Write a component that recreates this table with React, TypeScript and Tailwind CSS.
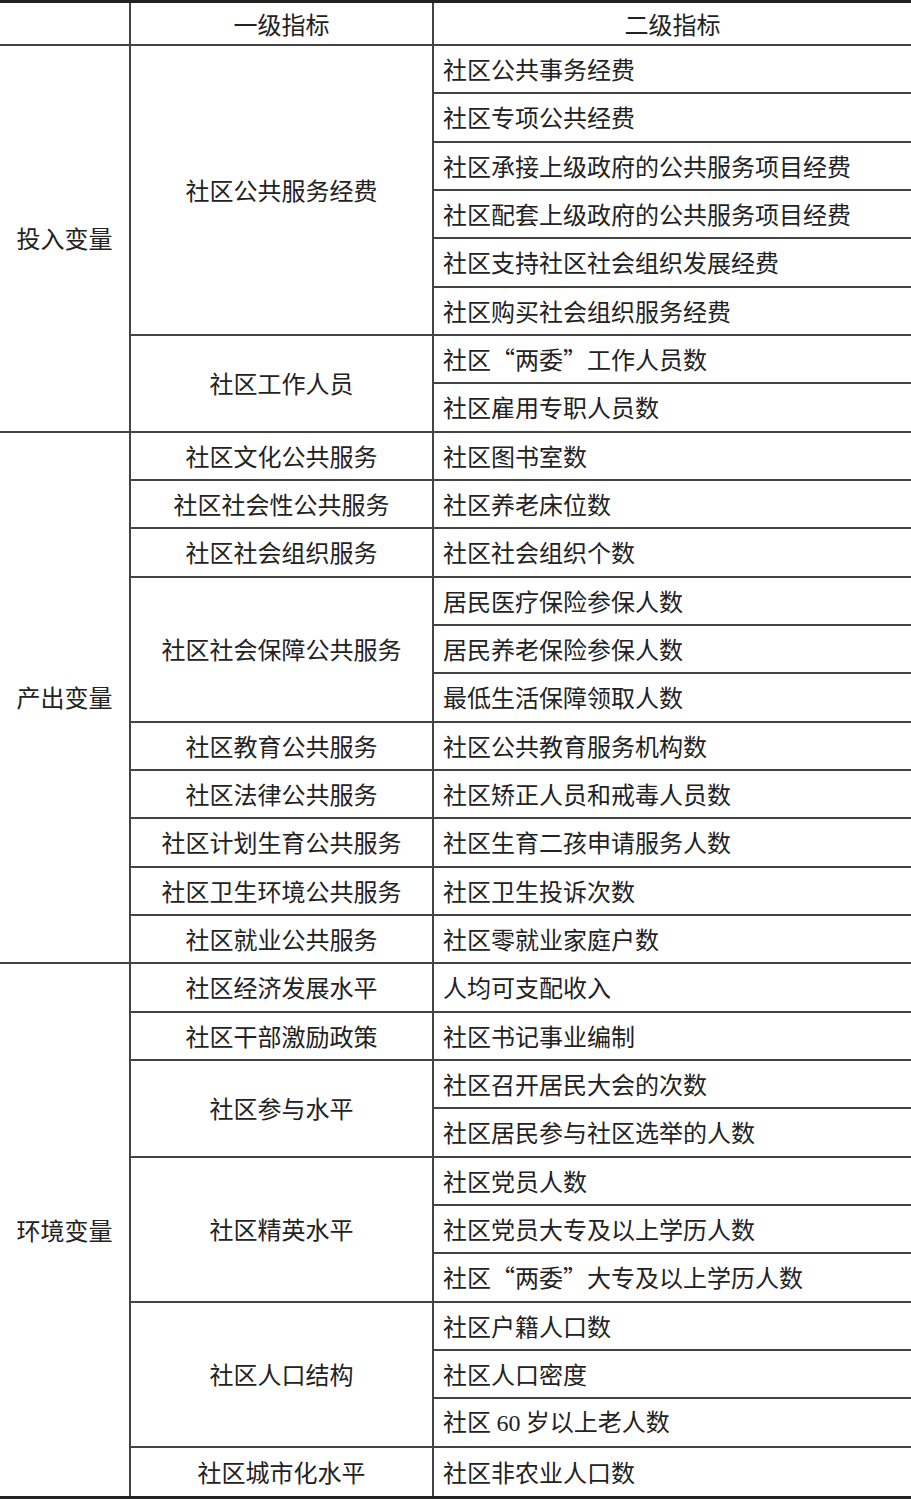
const groups: { name: string; subs: { name: string; items: string[] }[] }[] = [
  {
    name: "投入变量",
    subs: [
      {
        name: "社区公共服务经费",
        items: [
          "社区公共事务经费",
          "社区专项公共经费",
          "社区承接上级政府的公共服务项目经费",
          "社区配套上级政府的公共服务项目经费",
          "社区支持社区社会组织发展经费",
          "社区购买社会组织服务经费",
        ],
      },
      { name: "社区工作人员", items: ["社区“两委”工作人员数", "社区雇用专职人员数"] },
    ],
  },
  {
    name: "产出变量",
    subs: [
      { name: "社区文化公共服务", items: ["社区图书室数"] },
      { name: "社区社会性公共服务", items: ["社区养老床位数"] },
      { name: "社区社会组织服务", items: ["社区社会组织个数"] },
      {
        name: "社区社会保障公共服务",
        items: ["居民医疗保险参保人数", "居民养老保险参保人数", "最低生活保障领取人数"],
      },
      { name: "社区教育公共服务", items: ["社区公共教育服务机构数"] },
      { name: "社区法律公共服务", items: ["社区矫正人员和戒毒人员数"] },
      { name: "社区计划生育公共服务", items: ["社区生育二孩申请服务人数"] },
      { name: "社区卫生环境公共服务", items: ["社区卫生投诉次数"] },
      { name: "社区就业公共服务", items: ["社区零就业家庭户数"] },
    ],
  },
  {
    name: "环境变量",
    subs: [
      { name: "社区经济发展水平", items: ["人均可支配收入"] },
      { name: "社区干部激励政策", items: ["社区书记事业编制"] },
      { name: "社区参与水平", items: ["社区召开居民大会的次数", "社区居民参与社区选举的人数"] },
      {
        name: "社区精英水平",
        items: ["社区党员人数", "社区党员大专及以上学历人数", "社区“两委”大专及以上学历人数"],
      },
      { name: "社区人口结构", items: ["社区户籍人口数", "社区人口密度", "社区 60 岁以上老人数"] },
      { name: "社区城市化水平", items: ["社区非农业人口数"] },
    ],
  },
];

const TOTAL = 30;

// digits are set in the Latin serif, like the printed table
function ItemText({ text }: { text: string }) {
  if (!text.includes("60")) return <span>{text}</span>;
  const [a, b] = text.split("60");
  return (
    <span className="whitespace-pre">
      {a}
      <span className="font-['Liberation_Serif',serif]">60</span>
      {b}
    </span>
  );
}

export default function App() {
  const cells: React.ReactNode[] = [];
  let row = 2; // grid line index; row 1 is the header

  groups.forEach((g, gi) => {
    const gSpan = g.subs.reduce((n, s) => n + s.items.length, 0);
    const gStart = row;
    const gEnd = gStart + gSpan;
    cells.push(
      <div
        key={`g${gi}`}
        className={`col-start-1 flex items-center justify-center border-r-2 border-[#444] ${
          gEnd - 2 < TOTAL ? "border-b-2" : ""
        }`}
        style={{ gridRow: `${gStart} / ${gEnd}` }}
      >
        {g.name}
      </div>
    );
    g.subs.forEach((s, si) => {
      const sStart = row;
      const sEnd = sStart + s.items.length;
      cells.push(
        <div
          key={`s${gi}-${si}`}
          className={`col-start-2 flex items-center justify-center border-r-2 border-[#444] ${
            sEnd - 2 < TOTAL ? "border-b-2" : ""
          }`}
          style={{ gridRow: `${sStart} / ${sEnd}` }}
        >
          {s.name}
        </div>
      );
      s.items.forEach((it, ii) => {
        const r = row + ii;
        cells.push(
          <div
            key={`i${gi}-${si}-${ii}`}
            className={`col-start-3 flex items-center pl-[9px] border-[#444] ${
              r - 1 < TOTAL ? "border-b-2" : ""
            }`}
            style={{ gridRow: `${r} / ${r + 1}` }}
          >
            <ItemText text={it} />
          </div>
        );
      });
      row = sEnd;
    });
  });

  return (
    <div className="w-[911px] bg-white font-['Noto_Sans_CJK_SC',sans-serif] text-[24px] leading-none text-[#222]">
      <div className="border-t-[3px] border-b-[3px] border-[#222]">
        <div className="grid h-[1493px] grid-cols-[131px_303px_1fr] grid-rows-[43px_repeat(30,minmax(0,1fr))]">
          <div className="col-start-1 row-start-1 border-r-2 border-b-2 border-[#444]" />
          <div className="col-start-2 row-start-1 flex items-center justify-center border-r-2 border-b-2 border-[#444]">
            一级指标
          </div>
          <div className="col-start-3 row-start-1 flex items-center justify-center border-b-2 border-[#444]">
            二级指标
          </div>
          {cells}
        </div>
      </div>
    </div>
  );
}
